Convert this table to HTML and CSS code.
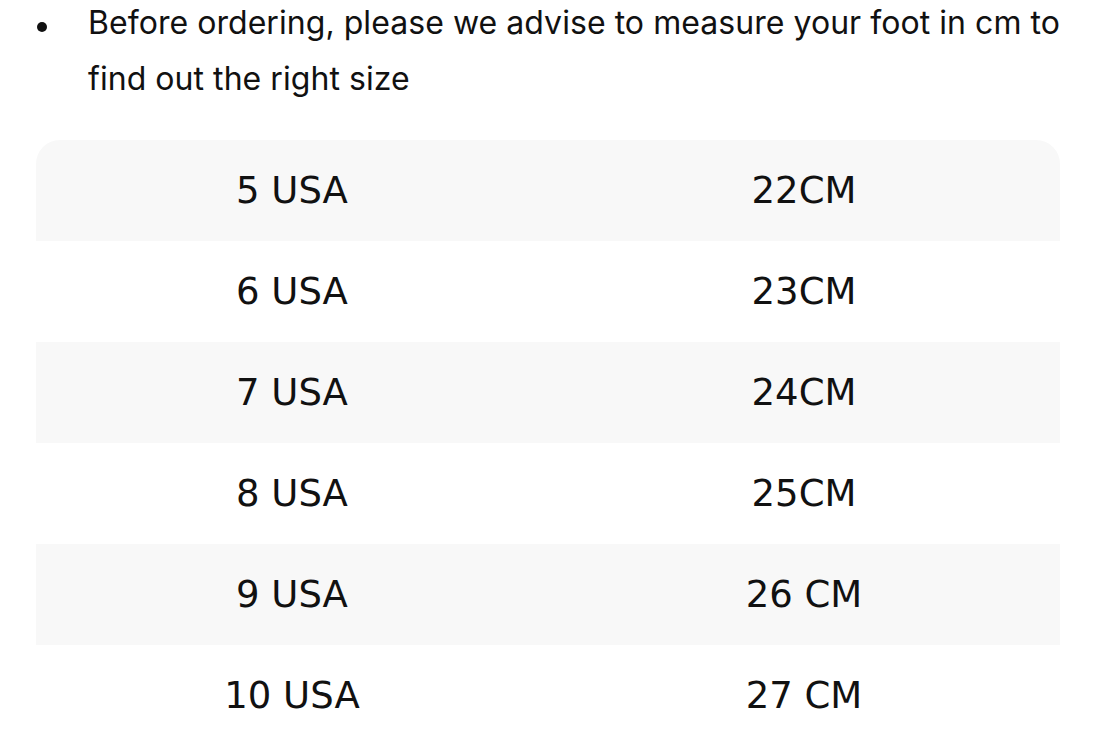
FILE: index.html
```html
<!DOCTYPE html>
<html>
<head>
<meta charset="utf-8">
<link rel="stylesheet" href="styles.css">
</head>
<body>
<div class="note">
  <span class="bullet"></span>
  <p class="note-text">Before ordering, please we advise to measure your foot in cm to find out the right size</p>
</div>
<div class="table">
  <div class="row"><div class="cell">5 USA</div><div class="cell">22CM</div></div>
  <div class="row"><div class="cell">6 USA</div><div class="cell">23CM</div></div>
  <div class="row"><div class="cell">7 USA</div><div class="cell">24CM</div></div>
  <div class="row"><div class="cell">8 USA</div><div class="cell">25CM</div></div>
  <div class="row"><div class="cell">9 USA</div><div class="cell">26 CM</div></div>
  <div class="row"><div class="cell">10 USA</div><div class="cell">27 CM</div></div>
</div>
</body>
</html>
```
FILE: styles.css
```css
html, body {
  margin: 0;
  padding: 0;
  background: #ffffff;
}
body {
  width: 1095px;
  height: 748px;
  overflow: hidden;
}
.note {
  display: flex;
  align-items: flex-start;
  height: 112px;
  padding: 0 30px 0 37px;
  color: #111111;
  font-family: Inter, "Noto Sans", sans-serif;
}
.bullet {
  flex: none;
  width: 10px;
  height: 10px;
  border-radius: 50%;
  background: #111111;
  margin-top: 22px;
  margin-right: 41px;
}
.note-text {
  margin: -5px 0 0 0;
  font-size: 32px;
  letter-spacing: 0.05px;
  line-height: 56px;
}
.table {
  margin: 28px 0 0 36px;
  width: 1024px;
  border-radius: 24px 24px 0 0;
  overflow: hidden;
  font-family: "DejaVu Sans", sans-serif;
  color: #111111;
}
.row {
  display: grid;
  grid-template-columns: 1fr 1fr;
  height: 101px;
  align-items: center;
}
.row:nth-child(odd) {
  background: #f8f8f8;
}
.cell {
  text-align: center;
  font-size: 37px;
}
```
